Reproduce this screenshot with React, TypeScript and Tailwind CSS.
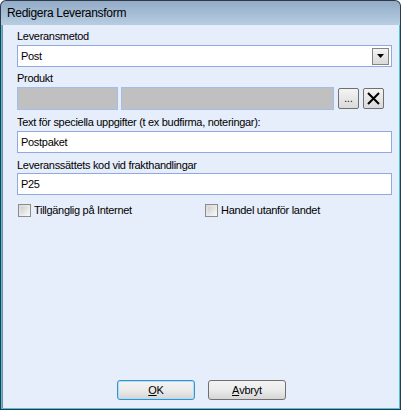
import React from 'react';

const font = { fontFamily: '"Liberation Sans", Arial, sans-serif' };

function Label({ children }: { children: React.ReactNode }) {
  return <div className="text-[11px] leading-[13px] h-[13px] tracking-[-0.3px] text-black whitespace-nowrap">{children}</div>;
}

function TextBox({ value }: { value: string }) {
  return (
    <div className="h-[22px] bg-white border border-[#8eaae0] flex items-center px-[3px] text-[11px] tracking-[-0.3px] text-black">
      {value}
    </div>
  );
}

function Check({ label }: { label: string }) {
  return (
    <div className="flex items-center gap-[3px] text-[11px] tracking-[-0.3px] text-black">
      <div className="w-[13px] h-[13px] border border-[#8c8c8c] bg-gradient-to-br from-[#d8d8d8] to-[#f8f8f8] p-[2px]">
        <div className="w-full h-full bg-gradient-to-br from-[#cfcfcf] to-[#f4f4f4]" />
      </div>
      <span>{label}</span>
    </div>
  );
}

function Button({ children, focused }: { children: React.ReactNode; focused?: boolean }) {
  return (
    <div
      className={`w-[78px] h-[20px] rounded-[3px] border flex items-center justify-center text-[11px] tracking-[-0.2px] text-black bg-gradient-to-b from-[#f3f3f3] via-[#ebebeb] to-[#d6d6d6] ${
        focused ? 'border-[#3d8fc7] shadow-[inset_0_0_0_1px_#a8e0f6]' : 'border-[#707070]'
      }`}
    >
      {children}
    </div>
  );
}

export default function App() {
  return (
    <div className="w-[401px] h-[410px] flex flex-col bg-[#2d3a48] rounded-t-[6px] p-px" style={font}>
      <div className="h-[24px] shrink-0 rounded-t-[5px] bg-gradient-to-b from-[#93abc6] to-[#b6cde2] flex items-center px-[6px] text-[12px] tracking-[-0.3px] text-black">
        Redigera Leveransform
      </div>
      <div className="flex-1 bg-[#48c2de] px-px pb-px flex">
        <div className="flex-1 bg-[#e6edfb] border-l border-[#7d8da0] flex flex-col pl-[14px] pr-[7px] pt-[5px]">
          <Label>Leveransmetod</Label>
          <div className="mt-[2px] h-[22px] bg-white border border-[#8eaae0] flex items-center pl-[3px] pr-[2px] text-[11px] tracking-[-0.3px] text-black">
            <span className="flex-1">Post</span>
            <div className="w-[17px] h-[17px] border border-[#858585] bg-gradient-to-b from-[#f4f4f4] to-[#d9d9d9] flex items-center justify-center">
              <svg width="7" height="4" viewBox="0 0 7 4">
                <path d="M0 0h7L3.5 4z" fill="#000" />
              </svg>
            </div>
          </div>

          <div className="mt-[5px]">
            <Label>Produkt</Label>
          </div>
          <div className="mt-[2px] flex items-center">
            <div className="w-[101px] h-[23px] bg-[#c0c0c0] border border-[#a4bde8]" />
            <div className="ml-[3px] w-[213px] h-[23px] bg-[#c0c0c0] border border-[#a4bde8]" />
            <div className="ml-[4px] w-[21px] h-[21px] rounded-[2px] border border-[#707070] bg-gradient-to-b from-[#f4f4f4] to-[#dadada] flex items-end justify-center pb-[4px] text-[10px] leading-[10px] text-black">
              ...
            </div>
            <div className="ml-[4px] w-[21px] h-[21px] rounded-[2px] border border-[#707070] bg-gradient-to-b from-[#f4f4f4] to-[#dadada] flex items-center justify-center">
              <svg width="15" height="15" viewBox="0 0 15 15">
                <path d="M2 2L13 13M13 2L2 13" stroke="#000" strokeWidth="2" />
              </svg>
            </div>
          </div>

          <div className="mt-[6px]">
            <Label>Text för speciella uppgifter (t ex budfirma, noteringar):</Label>
          </div>
          <div className="mt-[2px]">
            <TextBox value="Postpaket" />
          </div>

          <div className="mt-[6px]">
            <Label>Leveranssättets kod vid frakthandlingar</Label>
          </div>
          <div className="mt-[1px]">
            <TextBox value="P25" />
          </div>

          <div className="mt-[7px] flex">
            <div className="w-[188px] pl-[1px]">
              <Check label="Tillgänglig på Internet" />
            </div>
            <Check label="Handel utanför landet" />
          </div>

          <div className="flex-1" />
          <div className="flex gap-[13px] mb-[8px] ml-[100px]">
            <Button focused>
              <span className="underline">O</span>K
            </Button>
            <Button>
              <span className="underline">A</span>vbryt
            </Button>
          </div>
        </div>
      </div>
    </div>
  );
}
